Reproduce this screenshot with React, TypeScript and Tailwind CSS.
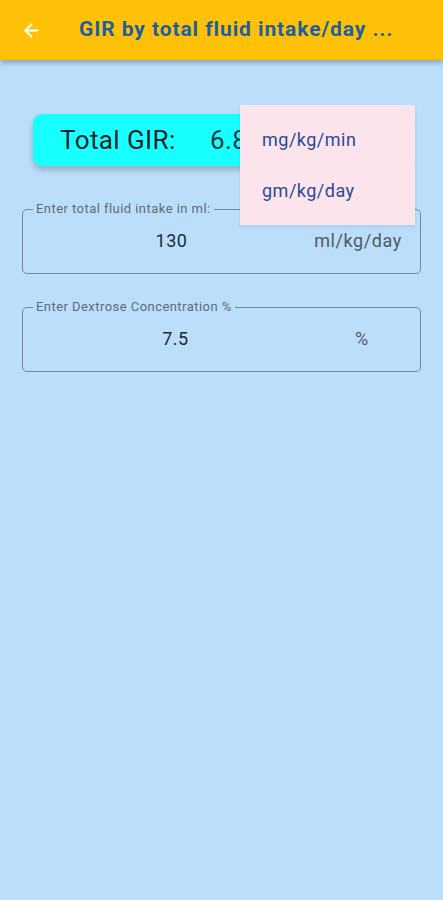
import { ArrowLeft } from 'lucide-react';

const font = { fontFamily: 'Roboto, "Noto Sans", sans-serif' };

function OutlinedField({
  label,
  value,
  suffix,
  rowClass,
  suffixClass,
}: {
  label: string;
  value: string;
  suffix: string;
  rowClass: string;
  suffixClass: string;
}) {
  return (
    <fieldset className="mx-[22px] h-[72px] rounded-[5px] border border-[#74889a] px-0 pb-0 pt-0">
      <legend className="ml-[10px] px-[3px] text-[13px] leading-[14px] tracking-[0.45px] text-[#5f6c78]">{label}</legend>
      <div className={`flex h-[57px] items-center pb-[8px] ${rowClass}`}>
        <span className="flex-1 text-center text-[18px] tracking-[0.5px] text-[#222b33]">{value}</span>
        <span className={`shrink-0 whitespace-nowrap text-[18px] tracking-[0.6px] text-[#4f5a66] ${suffixClass}`}>{suffix}</span>
      </div>
    </fieldset>
  );
}

export default function App() {
  return (
    <div className="relative min-h-[900px] w-[443px] bg-[#BBDEFB]" style={font}>
      {/* App bar */}
      <header className="relative z-10 flex h-[60px] items-center bg-[#FFC107] shadow-[0_3px_5px_rgba(0,0,0,0.25)]">
        <div className="flex w-[79px] pl-[21px]">
          <ArrowLeft className="h-[21px] w-[21px] text-white" strokeWidth={2.2} />
        </div>
        <h1 className="text-[21px] font-bold tracking-[0.9px] text-[#1e5f9e]">GIR by total fluid intake/day ...</h1>
      </header>

      {/* Result card */}
      <div className="mx-[33px] mt-[54px] flex h-[52px] items-center rounded-[9px] bg-[#18FFFF] shadow-[0_4px_6px_rgba(0,0,0,0.22)]">
        <span className="ml-[27px] w-[150px] text-[26px] tracking-[0.4px] text-[#18242b]">Total GIR:</span>
        <span className="text-[26px] tracking-[0.4px] text-[#2c3a40]">6.8</span>
      </div>

      {/* Fields */}
      <div className="mt-[36px] flex flex-col gap-[26px]">
        <OutlinedField
          label="Enter total fluid intake in ml:"
          value="130"
          suffix="ml/kg/day"
          rowClass="pl-[6px]"
          suffixClass="w-[106px] pr-[18px] text-right"
        />
        <OutlinedField
          label="Enter Dextrose Concentration %"
          value="7.5"
          suffix="%"
          rowClass=""
          suffixClass="w-[92px] pl-[27px]"
        />
      </div>

      {/* Unit menu */}
      <div className="absolute left-[240px] top-[105px] z-20 flex h-[120px] w-[175px] flex-col justify-center bg-[#FCE4EC] shadow-[0_2px_4px_rgba(0,0,0,0.08)]">
        <div className="flex h-[50px] items-center pb-[2px] pl-[22px] text-[18px] tracking-[0.5px] text-[#2a4b94]">mg/kg/min</div>
        <div className="flex h-[50px] items-center pl-[22px] text-[18px] tracking-[0.5px] text-[#2a4b94]">gm/kg/day</div>
      </div>
    </div>
  );
}
